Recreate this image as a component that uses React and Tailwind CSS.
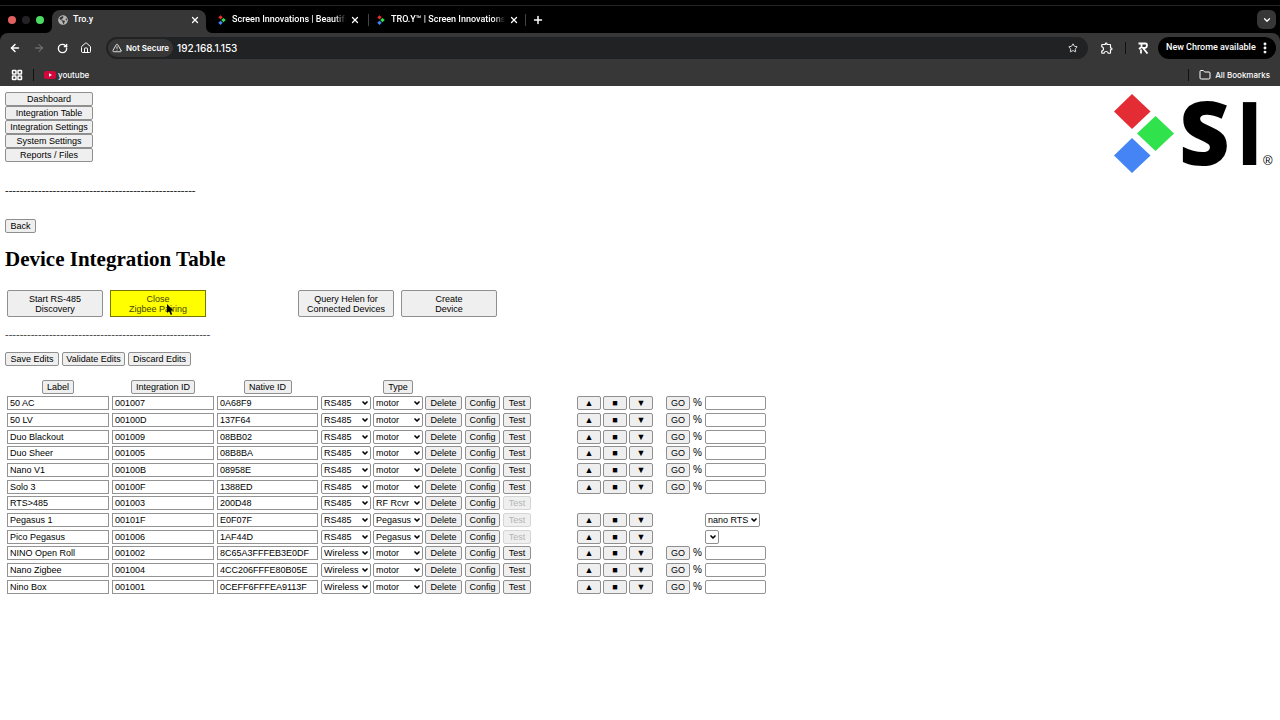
import React, { useState } from "react";
import {
  ArrowLeft,
  ArrowRight,
  ChevronDown,
  EllipsisVertical,
  Folder,
  House,
  LayoutGrid,
  Plus,
  RotateCw,
  Star,
  TriangleAlert,
  X,
} from "lucide-react";
import { FaGlobeAmericas } from "react-icons/fa";
import { MdOutlineExtension } from "react-icons/md";

const navItems = [
  "Dashboard",
  "Integration Table",
  "Integration Settings",
  "System Settings",
  "Reports / Files",
];

const devices = [
  { label: "50 AC", id: "001007", native: "0A68F9", bus: "RS485", type: "motor", control: "go" },
  { label: "50 LV", id: "00100D", native: "137F64", bus: "RS485", type: "motor", control: "go" },
  { label: "Duo Blackout", id: "001009", native: "08BB02", bus: "RS485", type: "motor", control: "go" },
  { label: "Duo Sheer", id: "001005", native: "08B8BA", bus: "RS485", type: "motor", control: "go" },
  { label: "Nano V1", id: "00100B", native: "08958E", bus: "RS485", type: "motor", control: "go" },
  { label: "Solo 3", id: "00100F", native: "1388ED", bus: "RS485", type: "motor", control: "go" },
  { label: "RTS>485", id: "001003", native: "200D48", bus: "RS485", type: "RF Rcvr", control: "none" },
  { label: "Pegasus 1", id: "00101F", native: "E0F07F", bus: "RS485", type: "Pegasus", control: "list", channel: "nano RTS" },
  { label: "Pico Pegasus", id: "001006", native: "1AF44D", bus: "RS485", type: "Pegasus", control: "list", channel: "" },
  { label: "NINO Open Roll", id: "001002", native: "8C65A3FFFEB3E0DF", bus: "Wireless", type: "motor", control: "go" },
  { label: "Nano Zigbee", id: "001004", native: "4CC206FFFE80B05E", bus: "Wireless", type: "motor", control: "go" },
  { label: "Nino Box", id: "001001", native: "0CEFF6FFFEA9113F", bus: "Wireless", type: "motor", control: "go" },
];

function PageButton({ className = "h-3.5", children, ...props }) {
  return (
    <button
      type="button"
      className={`rounded-xs border border-[#8f8f8f] bg-[#efefef] text-center text-[9px] whitespace-nowrap disabled:border-[#d5d5d5] disabled:text-[#b5b5b5] ${className}`}
      {...props}
    >
      {children}
    </button>
  );
}

function Field({ label, value, className = "" }) {
  return (
    <input
      aria-label={label}
      defaultValue={value}
      className={`block h-3.5 w-full border border-[#939393] bg-white px-0.5 text-[9px] leading-3 ${className}`}
    />
  );
}

function Picker({ label, value, options, className = "" }) {
  return (
    <span className={`relative block h-3.5 ${className}`}>
      <select
        aria-label={label}
        defaultValue={value}
        className="block h-3.5 w-full appearance-none rounded-xs border border-[#8f8f8f] bg-white pl-0.5 text-[9px] leading-3"
      >
        {options.map((option) => (
          <option key={option}>{option}</option>
        ))}
      </select>
      <ChevronDown
        className="pointer-events-none absolute top-[3px] right-0.5 size-2"
        strokeWidth={5}
      />
    </span>
  );
}

function Diamonds({ className }) {
  return (
    <svg viewBox="0 0 60 80" className={className} aria-hidden="true">
      <path d="M18 1L36 18.500L18 36L0 18.500Z" fill="#e32c34" />
      <path d="M42 23L60 40.500L42 58L24 40.500Z" fill="#30e24c" />
      <path d="M18 45L36 62.500L18 80L0 62.500Z" fill="#4584f4" />
    </svg>
  );
}

function Logo() {
  return (
    <svg
      viewBox="0 0 165 84"
      className="h-[84px] w-[165px] shrink-0 overflow-visible"
      role="img"
      aria-label="SI"
    >
      <path d="M22 2L40.500 19.500L22 37L4 19.500Z" fill="#e32c34" />
      <path d="M45.500 24L64 41.500L45.500 59L27 41.500Z" fill="#30e24c" />
      <path d="M22 46L40.500 63.500L22 81L4 63.500Z" fill="#4584f4" />
      <g className="font-['Open_Sans',sans-serif]" fontSize="88">
        <text x="69" y="73" className="font-extrabold">S</text>
        <text x="125" y="73" className="font-bold">I</text>
      </g>
      <text x="153" y="73" fontSize="13" className="font-['Liberation_Sans',sans-serif]">
        ®
      </text>
    </svg>
  );
}

function Tab({ title }) {
  return (
    <div className="flex w-[142px] items-center">
      <Diamonds className="mr-1.5 h-2.5 w-2 shrink-0" />
      <span className="flex-1 overflow-hidden whitespace-nowrap [mask-image:linear-gradient(to_right,black_90%,transparent)]">
        {title}
      </span>
      <button type="button" aria-label="Close tab" className="ml-1">
        <X className="size-2.5" strokeWidth={3} />
      </button>
    </div>
  );
}

function Browser() {
  return (
    <header className="bg-black font-[Roboto,sans-serif] text-[9px] font-medium text-white">
      <div className="flex h-[33px] border-t-[5px] border-black">
        <div className="flex w-full items-center border-t border-[#262626]">
          <div className="flex w-[52px] items-center gap-1.5 pl-2">
            <span className="size-2 rounded-full bg-[#e0605e]" />
            <span className="size-2 rounded-full bg-[#242226]" />
            <span className="size-2 rounded-full bg-[#4cd964]" />
          </div>
          <div className="relative flex h-[23px] w-[154px] items-center self-end rounded-t-lg bg-[#373737] px-1.5 pb-1">
            <FaGlobeAmericas className="mr-[5px] size-2.5 text-[#b4b4b4]" />
            <span className="flex-1">Tro.y</span>
            <button type="button" aria-label="Close tab">
              <X className="size-2.5" strokeWidth={3} />
            </button>
            {/* curved feet of the active tab */}
            <svg viewBox="0 0 6 6" className="absolute bottom-0 -left-1.5 size-1.5">
              <path d="M6 0V6H0A6 6 0 0 0 6 0Z" fill="#373737" />
            </svg>
            <svg viewBox="0 0 6 6" className="absolute -right-1.5 bottom-0 size-1.5">
              <path d="M0 0V6H6A6 6 0 0 1 0 0Z" fill="#373737" />
            </svg>
          </div>
          <div className="flex flex-1 items-center pl-3">
            <Tab title="Screen Innovations | Beautiful" />
            <span className="mx-2 h-3 w-px bg-[#444]" />
            <Tab title="TRO.Y™ | Screen Innovations" />
            <span className="mx-1.5 h-3 w-px bg-[#444]" />
            <button type="button" aria-label="New tab">
              <Plus className="size-3" strokeWidth={3} />
            </button>
          </div>
          <button
            type="button"
            aria-label="Search tabs"
            className="mr-1 flex size-[19px] items-center justify-center rounded-md bg-[#373737]"
          >
            <ChevronDown className="size-2.5" strokeWidth={3} />
          </button>
        </div>
      </div>

      <div className="flex h-[30px] items-center rounded-t-lg bg-[#373737] pr-1">
        <div className="flex w-[106px] items-center gap-3 pl-[9px]">
          <button type="button" aria-label="Back">
            <ArrowLeft className="size-3" strokeWidth={3} />
          </button>
          <button type="button" aria-label="Forward" className="text-[#858585]">
            <ArrowRight className="size-3" strokeWidth={2} />
          </button>
          <button type="button" aria-label="Reload">
            <RotateCw className="size-[11px]" strokeWidth={3} />
          </button>
          <button type="button" aria-label="Home">
            <House className="size-3" strokeWidth={2} />
          </button>
        </div>
        <div className="flex h-[22px] flex-1 items-center rounded-full bg-[#202223] pr-2.5 pl-0.5 font-[Inter,sans-serif]">
          <span className="flex h-[18px] items-center gap-1 rounded-full bg-[#373737] px-1 text-[8px] font-semibold">
            <TriangleAlert className="size-2.5" strokeWidth={2} />
            Not Secure
          </span>
          <input
            aria-label="Address"
            defaultValue="192.168.1.153"
            className="ml-1 flex-1 bg-transparent text-[10px]"
          />
          <Star className="size-2.5" strokeWidth={2} />
        </div>
        <MdOutlineExtension className="ml-3 size-3.5" />
        <span className="mx-[11px] h-3 w-px bg-[#111]" />
        <svg
          viewBox="0 0 12 12"
          className="mr-[9px] size-3"
          fill="none"
          stroke="white"
          strokeWidth="1.8"
        >
          <path d="M1.500 1.500H8.500Q10 1.500 10 3.500T8 6H6L10.500 11.500M4.500 1.500V5L2 7M4 7.500V11.500" />
        </svg>
        <button
          type="button"
          className="flex h-[22px] w-[118px] items-center justify-between rounded-full bg-black pr-1 pl-2"
        >
          New Chrome available
          <EllipsisVertical className="size-3.5" strokeWidth={3} />
        </button>
      </div>

      <div className="flex h-[23px] items-center bg-[#373737] pr-2.5 pl-[11px] font-[Inter,sans-serif] text-[8px]">
        <LayoutGrid className="size-3" strokeWidth={3} />
        <span className="mx-2.5 h-3 w-px bg-[#111]" />
        <a href="#youtube" className="flex items-center gap-0.5">
          <svg viewBox="0 0 12 10" className="h-2.5 w-3">
            <rect y="1" width="12" height="8" rx="2.500" fill="#d4073c" />
            <path d="M5 3.200L8 5L5 6.800Z" fill="white" />
          </svg>
          youtube
        </a>
        <span className="ml-auto h-3 w-px bg-[#111]" />
        <a href="#bookmarks" className="ml-2.5 flex items-center gap-1">
          <Folder className="size-3" strokeWidth={2} />
          All Bookmarks
        </a>
      </div>
    </header>
  );
}

function DeviceRow({ device }) {
  const hasMotion = device.control !== "none";
  return (
    <tr>
      <td className="p-0 pr-[3px]">
        <Field label="Label" value={device.label} />
      </td>
      <td className="p-0 pr-[3px]">
        <Field label="Integration ID" value={device.id} />
      </td>
      <td className="p-0 pr-[3px]">
        <Field label="Native ID" value={device.native} />
      </td>
      <td className="p-0 pr-0.5">
        <Picker label="Connection" value={device.bus} options={["RS485", "Wireless"]} />
      </td>
      <td className="p-0 pr-0.5">
        <Picker label="Type" value={device.type} options={["motor", "RF Rcvr", "Pegasus"]} />
      </td>
      <td className="p-0">
        <div className="flex gap-[3px] leading-3">
          <PageButton className="h-3.5 w-[37px]">Delete</PageButton>
          <PageButton className="h-3.5 w-[35px]">Config</PageButton>
          <PageButton className="h-3.5 w-7" disabled={device.type !== "motor"}>
            Test
          </PageButton>
        </div>
      </td>
      <td className="p-0">
        {hasMotion && (
          <div className="flex gap-0.5 leading-3">
            <PageButton className="h-3.5 w-6" aria-label="Up">▲</PageButton>
            <PageButton className="h-3.5 w-6" aria-label="Stop">■</PageButton>
            <PageButton className="h-3.5 w-6" aria-label="Down">▼</PageButton>
          </div>
        )}
      </td>
      <td className="p-0">
        {device.control === "go" && (
          <div className="flex items-center gap-[3px] text-[10px] leading-3">
            <PageButton className="h-3.5 w-6">GO</PageButton>%
          </div>
        )}
      </td>
      <td className="p-0">
        {device.control === "go" && <Field label="Percent" value="" className="rounded-xs" />}
        {device.control === "list" && (
          <Picker
            label="Channel"
            value={device.channel}
            options={[device.channel]}
            className={device.channel ? "w-[55px]" : "w-3.5"}
          />
        )}
      </td>
    </tr>
  );
}

export default function App() {
  const [pairing, setPairing] = useState(true);

  return (
    <div className="min-h-screen bg-white font-['Liberation_Sans',Arial,sans-serif] text-black">
      <Browser />
      <main className="px-[5px] pt-1.5">
        <div className="flex items-start justify-between">
          <nav className="flex w-[88px] flex-col leading-3">
            {navItems.map((item) => (
              <PageButton key={item}>{item}</PageButton>
            ))}
          </nav>
          <Logo />
        </div>

        <p className="mt-2 font-['Liberation_Serif',serif] text-[11px] leading-3">
          {"-".repeat(52)}
        </p>
        <PageButton className="mt-[23px] block h-3.5 w-[31px] leading-3">Back</PageButton>

        <h1 className="mt-3.5 font-['Liberation_Serif',serif] text-[21px] leading-6 font-bold">
          Device Integration Table
        </h1>

        <div className="mt-[19px] flex gap-[7px] pl-0.5">
          <PageButton className="h-[27px] w-24 leading-[10px]">
            Start RS-485
            <br />
            Discovery
          </PageButton>
          <div className="relative">
            <button
              type="button"
              onClick={() => setPairing(!pairing)}
              className="block h-[27px] w-24 border border-[#777700] bg-[#ffff00] text-center text-[9px] leading-[10px] text-[#444400]"
            >
              {pairing ? "Close" : "Open"}
              <br />
              Zigbee Pairing
            </button>
            {/* mouse pointer */}
            <svg
              viewBox="0 0 8 12"
              className="pointer-events-none absolute top-3.5 left-[57px] h-3 w-2"
            >
              <path d="M0 0V9L2 7.200L3.800 11L5.200 10.200L3.600 6.600H6.500Z" fill="black" />
            </svg>
          </div>
          <PageButton className="ml-[85px] h-[27px] w-24 leading-[10px]">
            Query Helen for
            <br />
            Connected Devices
          </PageButton>
          <PageButton className="h-[27px] w-24 leading-[10px]">
            Create
            <br />
            Device
          </PageButton>
        </div>

        <p className="mt-[11px] font-['Liberation_Serif',serif] text-[11px] leading-3 text-[#333]">
          {"-".repeat(56)}
        </p>

        <div className="mt-3 flex gap-[3px] leading-3">
          <PageButton className="h-3.5 w-[54px]">Save Edits</PageButton>
          <PageButton className="h-3.5 w-[63px]">Validate Edits</PageButton>
          <PageButton className="h-3.5 w-[63px]">Discard Edits</PageButton>
        </div>

        <table className="mt-3 ml-0.5 h-[217px] w-[759px] table-fixed border-collapse">
          <colgroup>
            <col className="w-[105px]" />
            <col className="w-[105px]" />
            <col className="w-[104px]" />
            <col className="w-[52px]" />
            <col className="w-[52px]" />
            <col className="w-[152px]" />
            <col className="w-[89px]" />
            <col className="w-[39px]" />
            <col className="w-[61px]" />
          </colgroup>
          <thead>
            <tr className="h-[17px] leading-3">
              <th className="p-0 pr-[3px] font-normal">
                <PageButton className="mx-auto block h-3.5 w-8">Label</PageButton>
              </th>
              <th className="p-0 pr-[3px] font-normal">
                <PageButton className="mx-auto block h-3.5 w-16">Integration ID</PageButton>
              </th>
              <th className="p-0 pr-[3px] font-normal">
                <PageButton className="mx-auto block h-3.5 w-12">Native ID</PageButton>
              </th>
              <th className="p-0" />
              <th className="p-0 pr-0.5 font-normal">
                <PageButton className="mx-auto block h-3.5 w-[30px]">Type</PageButton>
              </th>
              <th className="p-0" colSpan={4} />
            </tr>
          </thead>
          <tbody>
            {devices.map((device) => (
              <DeviceRow key={device.id} device={device} />
            ))}
          </tbody>
        </table>
      </main>
    </div>
  );
}
